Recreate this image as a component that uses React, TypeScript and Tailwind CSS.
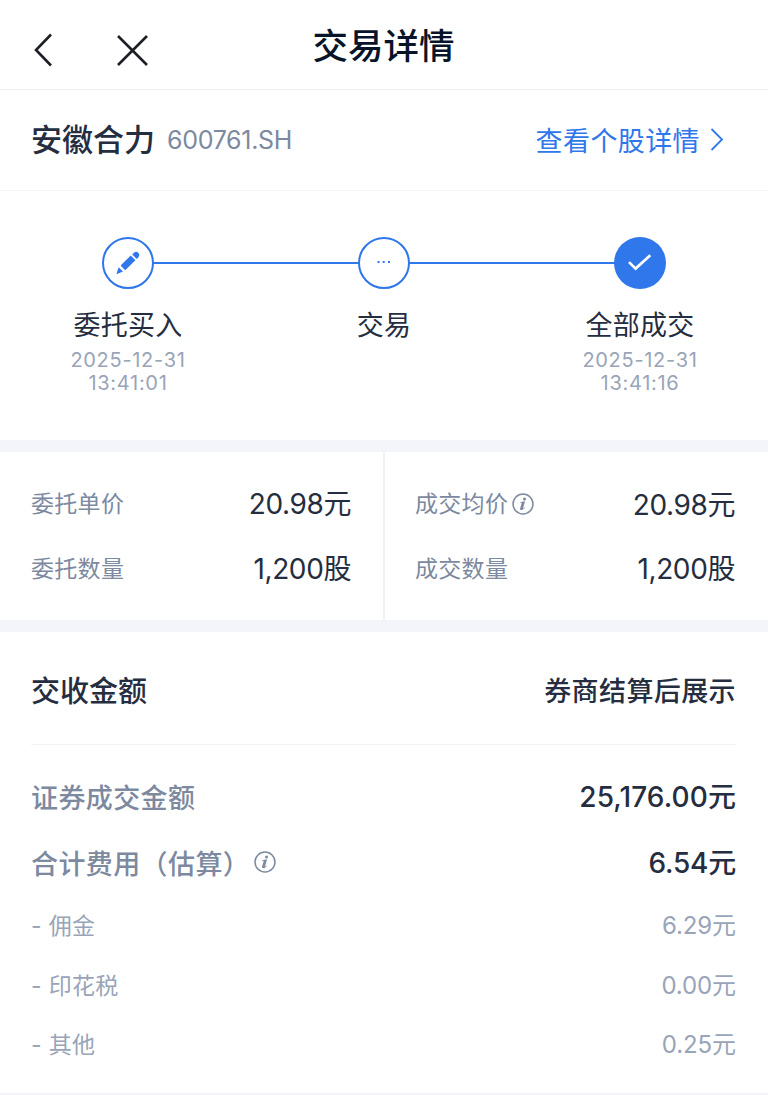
import type { ReactNode } from "react";

function InfoIcon({ className }: { className: string }) {
  return (
    <svg className={className} width="22" height="22" viewBox="0 0 22 22" fill="none">
      <circle cx="11" cy="11" r="10" stroke="#7c899f" strokeWidth="1.5" />
      <circle cx="12.5" cy="5.9" r="1.5" fill="#7c899f" />
      <path
        d="M8.1 9.2C9.8 8.9 11.2 8.5 13.1 8.2L11 15.2C10.9 15.7 11.1 15.7 11.5 15.4L12.5 14.3L12.9 14.7C11.9 16.2 10.8 17 9.4 17C8.3 17 7.8 16.4 8.1 15.4L9.6 10.4C9.6 9.9 9.3 9.8 8.1 9.8Z"
        fill="#7c899f"
      />
    </svg>
  );
}

interface StepProps {
  label: string;
  date?: string;
  time?: string;
  filled?: boolean;
  children: ReactNode;
}

function Step({ label, date, time, filled, children }: StepProps) {
  return (
    <div className="flex w-64 shrink-0 flex-col items-center">
      <div
        className={
          filled
            ? "flex size-[52px] items-center justify-center rounded-full bg-[#2f77ea]"
            : "flex size-[52px] items-center justify-center rounded-full border-2 border-[#2f77ea] bg-white"
        }
      >
        {children}
      </div>
      <div className="mt-[17px] h-10 text-[27px] leading-10 tracking-[0.3px] text-[#252d40]">{label}</div>
      <div className="mt-[3px] text-center text-[20px] leading-[23px] tracking-[0.7px] text-[#99a4b9]">
        <div>{date}</div>
        <div>{time}</div>
      </div>
    </div>
  );
}

function QuoteRow({ label, value, info, className }: { label: string; value: string; info?: boolean; className: string }) {
  return (
    <div className={`flex h-10 justify-between ${className}`}>
      <div className="flex items-center text-[23px] leading-10 tracking-[0.3px] text-[#7c899f]">
        {label}
        {info && <InfoIcon className="mb-px ml-[4px]" />}
      </div>
      <div className={info ? "pt-px text-[28px] leading-10 tracking-[-0.4px] text-[#252d40]" : "text-[28px] leading-10 tracking-[-0.4px] text-[#252d40]"}>
        {value}
      </div>
    </div>
  );
}

function FeeRow({ label, value, className }: { label: string; value: string; className: string }) {
  return (
    <div className={`flex h-10 items-center justify-between text-[23px] leading-10 text-[#99a4b9] ${className}`}>
      <div className="tracking-[0.3px]">{label}</div>
      <div className="text-[24px] tracking-[-0.1px]">{value}</div>
    </div>
  );
}

export default function App() {
  return (
    <div className="flex h-[1095px] w-[768px] flex-col overflow-hidden bg-white font-['Inter','Noto_Sans_CJK_SC',sans-serif]">
      <header className="grid h-[90px] shrink-0 grid-cols-3 items-center border-b border-[#eeeff2]">
        <div className="flex items-center gap-[61px] pt-[11px] pl-[32px]">
          <svg width="22" height="36" viewBox="0 0 22 36" fill="none" stroke="#1c2026" strokeWidth="2.6">
            <path d="M19 2.5L4 18L19 33.5" />
          </svg>
          <svg width="34" height="34" viewBox="0 0 34 34" fill="none" stroke="#1c2026" strokeWidth="2.6">
            <path d="M3 3L32 32M32 3L3 32" />
          </svg>
        </div>
        <h1 className="pt-[4px] pr-px text-center text-[35.5px] leading-[48px] font-medium text-[#07142a]">交易详情</h1>
      </header>

      <section className="flex h-[101px] shrink-0 items-center justify-between border-b border-[#f3f4f7] pr-[44px] pl-[31px]">
        <div className="flex items-center">
          <span className="text-[31px] leading-[48px] font-medium text-[#252d40]">安徽合力</span>
          <span className="mb-px ml-3 text-[25px] leading-[48px] tracking-[-0.3px] text-[#7c899f]">600761.SH</span>
        </div>
        <div className="flex items-center text-[27px] leading-[48px] tracking-[0.4px] text-[#2f77ea]">
          <span className="pt-[4px]">查看个股详情</span>
          <svg className="ml-[10px]" width="14" height="24" viewBox="0 0 14 24" fill="none" stroke="#2f77ea" strokeWidth="1.8">
            <path d="M1.5 1L12 11.5L1.5 22" />
          </svg>
        </div>
      </section>

      <section className="relative flex h-[249px] shrink-0 pt-[46px]">
        <div className="absolute top-[71px] left-[128px] h-[2px] w-[512px] bg-[#2f77ea]" />
        <div className="relative flex">
          <Step label="委托买入" date="2025-12-31" time="13:41:01">
            <svg width="24" height="24" viewBox="0 0 24 24" fill="#2f77ea">
              <path d="M0.4 23.2L2.6 16.2L7 20.6Z" />
              <path d="M4.6 14.6L14.8 4.6L19.4 9.2L9.2 19.2Z" />
              <path d="M16.2 3.4L18 1.7Q20.2 -0.1 22.4 1.9Q24.2 4.1 22.4 6.2L20.8 7.9Z" />
            </svg>
          </Step>
          <Step label="交易">
            <svg width="14" height="4" viewBox="0 0 14 4" fill="#2f77ea">
              <rect x="0.5" y="0" width="2" height="2" />
              <rect x="5.7" y="0" width="2" height="2" />
              <rect x="11" y="0" width="2" height="2" />
            </svg>
          </Step>
          <Step label="全部成交" date="2025-12-31" time="13:41:16" filled>
            <svg width="24" height="18" viewBox="0 0 24 18" fill="none" stroke="#fff" strokeWidth="2.7">
              <path d="M1 8.1L7.6 14.6L22.3 1.3" />
            </svg>
          </Step>
        </div>
      </section>

      <section className="flex h-[192px] shrink-0 border-y-[12px] border-[#f4f5fa]">
        <div className="w-[385px] border-r-2 border-r-[#f0f2f7] pr-[32px] pl-[31px]">
          <QuoteRow label="委托单价" value="20.98元" className="mt-8" />
          <QuoteRow label="委托数量" value="1,200股" className="mt-[25px]" />
        </div>
        <div className="flex-1 pr-[33px] pl-[30px]">
          <QuoteRow label="成交均价" value="20.98元" info className="mt-8" />
          <QuoteRow label="成交数量" value="1,200股" className="mt-[25px]" />
        </div>
      </section>

      <section className="flex flex-col pr-8 pl-[31px] text-[#252d40]">
        <div className="flex h-[113px] items-center justify-between border-b border-[#f0f2f7] pt-[7px] font-medium">
          <div className="text-[29px] leading-10">交收金额</div>
          <div className="text-[27px] leading-10 tracking-[0.4px]">券商结算后展示</div>
        </div>
        <div className="mt-8 flex h-10 items-center justify-between font-medium">
          <div className="pt-[3px] text-[27px] leading-10 tracking-[0.4px] text-[#7c899f]">证券成交金额</div>
          <div className="text-[28px] leading-10 tracking-[0.1px]">25,176.00元</div>
        </div>
        <div className="mt-[26px] flex h-10 items-center justify-between font-medium">
          <div className="flex items-center text-[27px] leading-10 tracking-[0.4px] text-[#7c899f]">
            <span className="pt-[3px]">合计费用（估算）</span>
            <InfoIcon className="mb-[3px] ml-1" />
          </div>
          <div className="text-[28px] leading-10 tracking-[-0.2px]">6.54元</div>
        </div>
        <FeeRow label="- 佣金" value="6.29元" className="mt-[23px]" />
        <FeeRow label="- 印花税" value="0.00元" className="mt-5" />
        <FeeRow label="- 其他" value="0.25元" className="mt-[19px]" />
      </section>
      <div className="mt-[28px] h-[2px] shrink-0 bg-[#f4f5fa]" />
    </div>
  );
}
